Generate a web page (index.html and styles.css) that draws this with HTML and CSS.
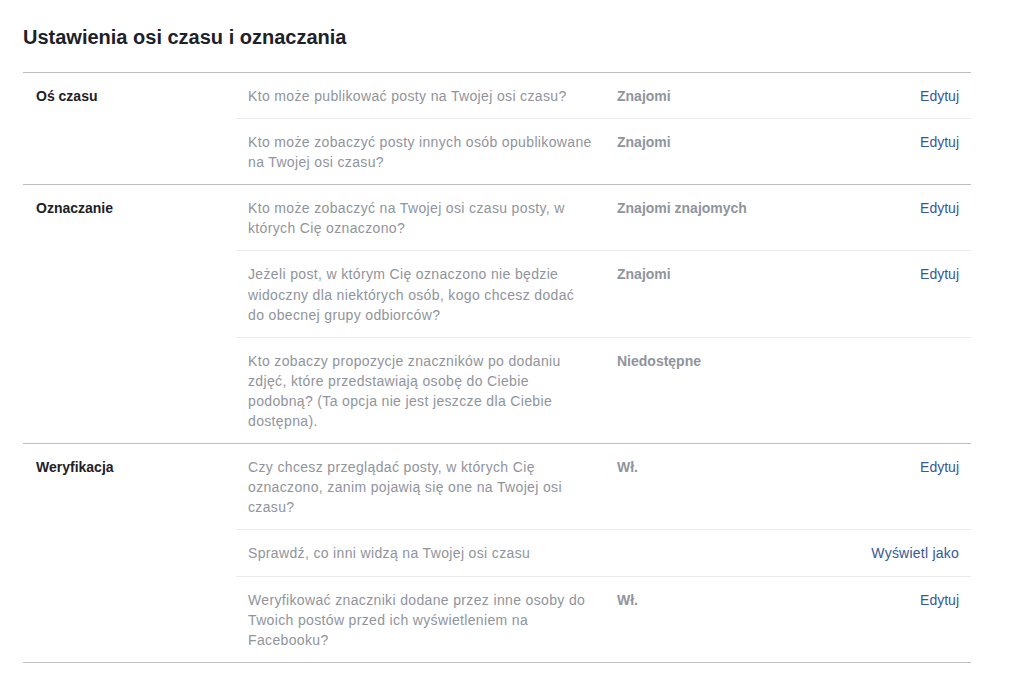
FILE: index.html
```html
<!DOCTYPE html>
<html lang="pl">
<head>
<meta charset="utf-8">
<title>Ustawienia osi czasu i oznaczania</title>
<link rel="stylesheet" href="styles.css">
</head>
<body>
<div class="page">
  <h1 class="title">Ustawienia osi czasu i oznaczania</h1>
  <div class="settings">
    <section class="section">
      <div class="section-label">Oś czasu</div>
      <div class="rows">
        <div class="row">
          <div class="question">Kto może publikować posty na Twojej osi czasu?</div>
          <div class="value">Znajomi</div>
          <a class="action" href="#">Edytuj</a>
        </div>
        <div class="row">
          <div class="question">Kto może zobaczyć posty innych osób opublikowane na Twojej osi czasu?</div>
          <div class="value">Znajomi</div>
          <a class="action" href="#">Edytuj</a>
        </div>
      </div>
    </section>
    <section class="section">
      <div class="section-label">Oznaczanie</div>
      <div class="rows">
        <div class="row">
          <div class="question">Kto może zobaczyć na Twojej osi czasu posty, w których Cię oznaczono?</div>
          <div class="value">Znajomi znajomych</div>
          <a class="action" href="#">Edytuj</a>
        </div>
        <div class="row">
          <div class="question">Jeżeli post, w którym Cię oznaczono nie będzie widoczny dla niektórych osób, kogo chcesz dodać do obecnej grupy odbiorców?</div>
          <div class="value">Znajomi</div>
          <a class="action" href="#">Edytuj</a>
        </div>
        <div class="row">
          <div class="question">Kto zobaczy propozycje znaczników po dodaniu zdjęć, które przedstawiają osobę do Ciebie podobną? (Ta opcja nie jest jeszcze dla Ciebie dostępna).</div>
          <div class="value">Niedostępne</div>
          <span class="action"></span>
        </div>
      </div>
    </section>
    <section class="section">
      <div class="section-label">Weryfikacja</div>
      <div class="rows">
        <div class="row">
          <div class="question">Czy chcesz przeglądać posty, w których Cię oznaczono, zanim pojawią się one na Twojej osi czasu?</div>
          <div class="value">Wł.</div>
          <a class="action" href="#">Edytuj</a>
        </div>
        <div class="row">
          <div class="question">Sprawdź, co inni widzą na Twojej osi czasu</div>
          <div class="value"></div>
          <a class="action wide" href="#">Wyświetl jako</a>
        </div>
        <div class="row">
          <div class="question">Weryfikować znaczniki dodane przez inne osoby do Twoich postów przed ich wyświetleniem na Facebooku?</div>
          <div class="value">Wł.</div>
          <a class="action" href="#">Edytuj</a>
        </div>
      </div>
    </section>
  </div>
</div>
</body>
</html>
```

FILE: styles.css
```css
html, body {
  margin: 0;
  padding: 0;
  background: #ffffff;
}

body {
  font-family: "Liberation Sans", Arial, Helvetica, sans-serif;
  color: #1d2129;
}

.page {
  padding: 25px 0 0 23px;
  width: 948px;
}

.title {
  margin: 0 0 23px 0;
  font-size: 20px;
  line-height: 24px;
  font-weight: bold;
  color: #1d2129;
}

.settings {
  border-bottom: 1px solid #bdbdbd;
}

.section {
  display: grid;
  grid-template-columns: 213px 1fr;
  border-top: 1px solid #bdbdbd;
}

.section-label {
  padding: 13px 0 0 13px;
  font-size: 14px;
  line-height: 20.1px;
  font-weight: bold;
  color: #1d2129;
}

.rows {
  display: flex;
  flex-direction: column;
}

.row {
  display: grid;
  grid-template-columns: 369px 1fr auto;
  padding: 13px 12px 12px 12px;
  border-top: 1px solid #e9ebee;
  font-size: 14px;
  line-height: 20.1px;
}

.row:first-child {
  border-top: none;
}

.question {
  width: 345px;
  color: #90949c;
  letter-spacing: 0.35px;
}

.value {
  font-weight: bold;
  color: #90949c;
}

.action {
  color: #365899;
  text-decoration: none;
  text-align: right;
}

.action.wide {
  letter-spacing: 0.23px;
}
```
